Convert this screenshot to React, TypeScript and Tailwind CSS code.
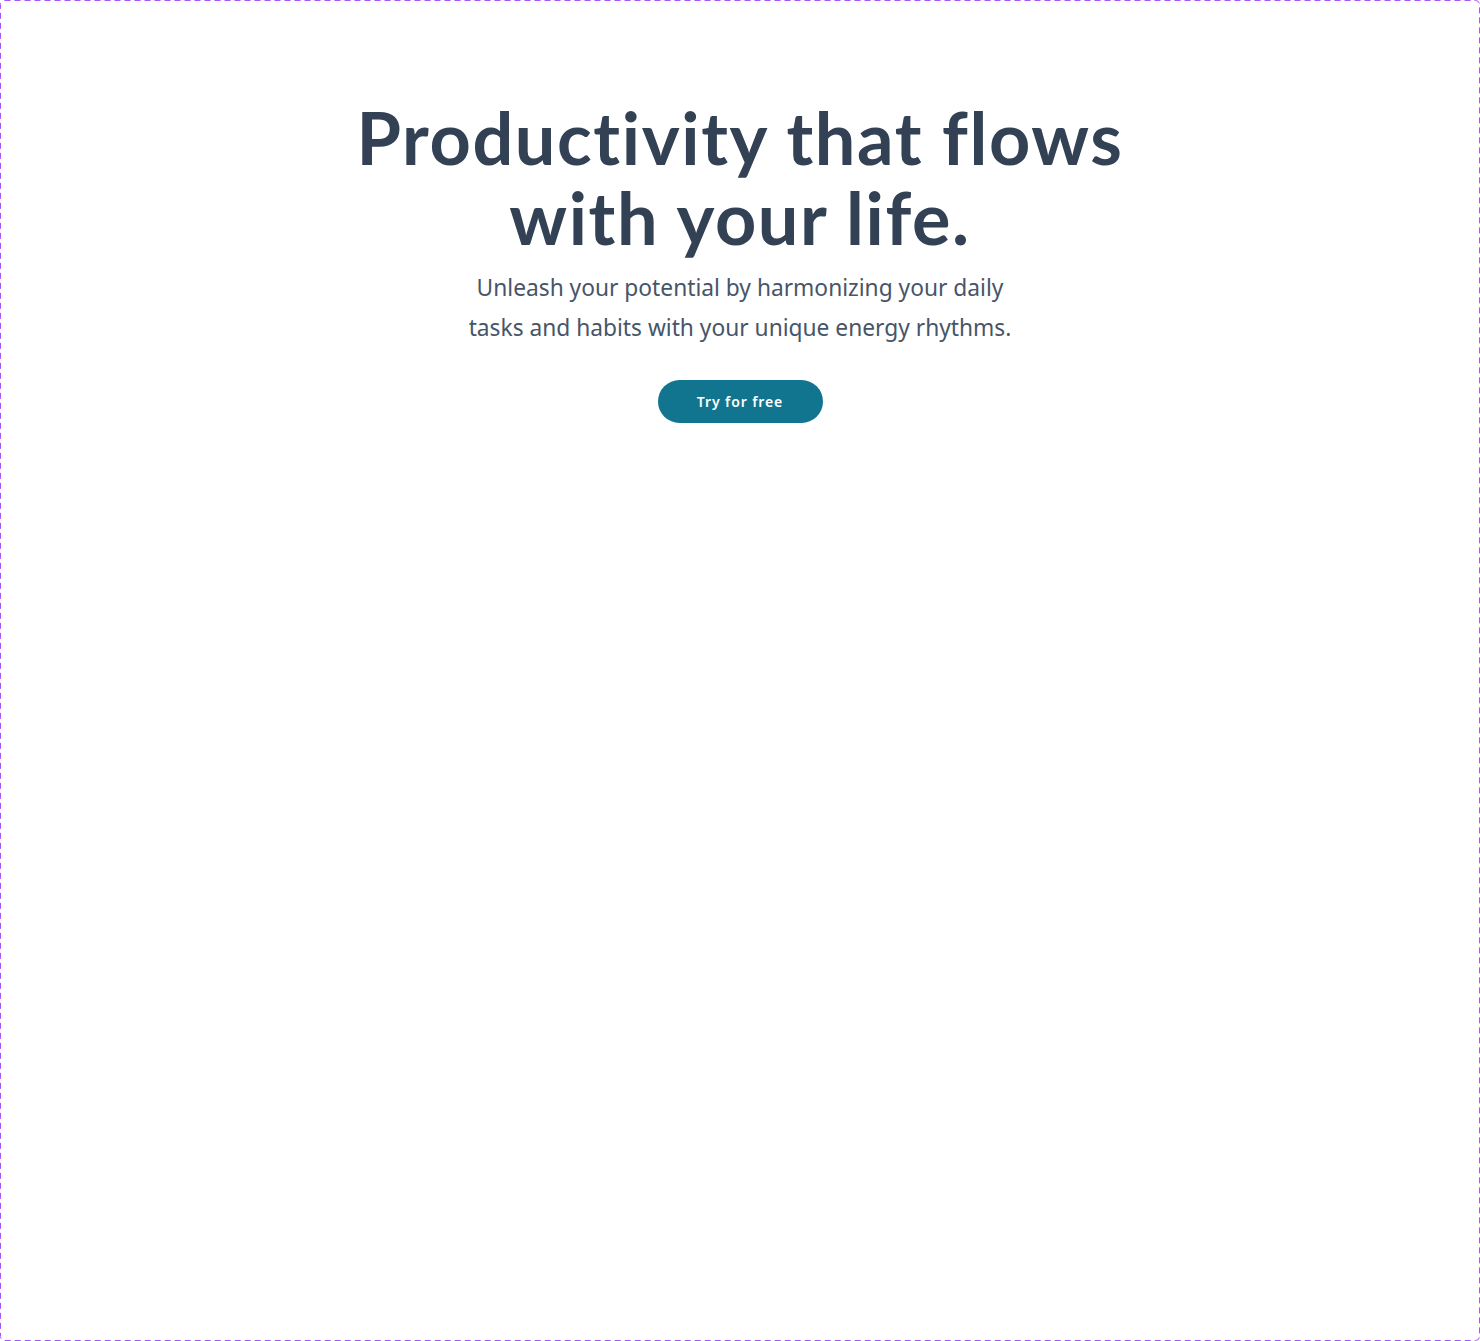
export default function App() {
  return (
    <div className="relative w-[1480px] h-[1341px] bg-white font-['Noto_Sans','Lato',sans-serif]">
      {/* dashed frame */}
      <svg className="absolute inset-0 pointer-events-none" width="1480" height="1341">
        <rect x="0.5" y="0.5" width="1479" height="1340" rx="4" fill="none" stroke="#a855f7" strokeWidth="1" strokeDasharray="6 4" />
      </svg>

      <section className="flex flex-col items-center pt-[97px] px-6 text-center">
        <h1 className="font-['Lato','Noto_Sans',sans-serif] text-[72px] leading-[80px] font-bold tracking-[1.6px] text-[#334155]">
          Productivity that flows
          <br />
          with your life.
        </h1>
        <p className="mt-[11px] max-w-[576px] text-[22.75px] leading-[40px] text-[#475569]">
          Unleash your potential by harmonizing your daily tasks and habits with your unique energy rhythms.
        </p>
        <a
          href="#"
          className="mt-8 inline-flex items-center justify-center h-[43px] w-[165px] rounded-full bg-[#11758f] text-white text-[14px] font-semibold tracking-[0.9px]"
        >
          Try for free
        </a>
      </section>
    </div>
  );
}
